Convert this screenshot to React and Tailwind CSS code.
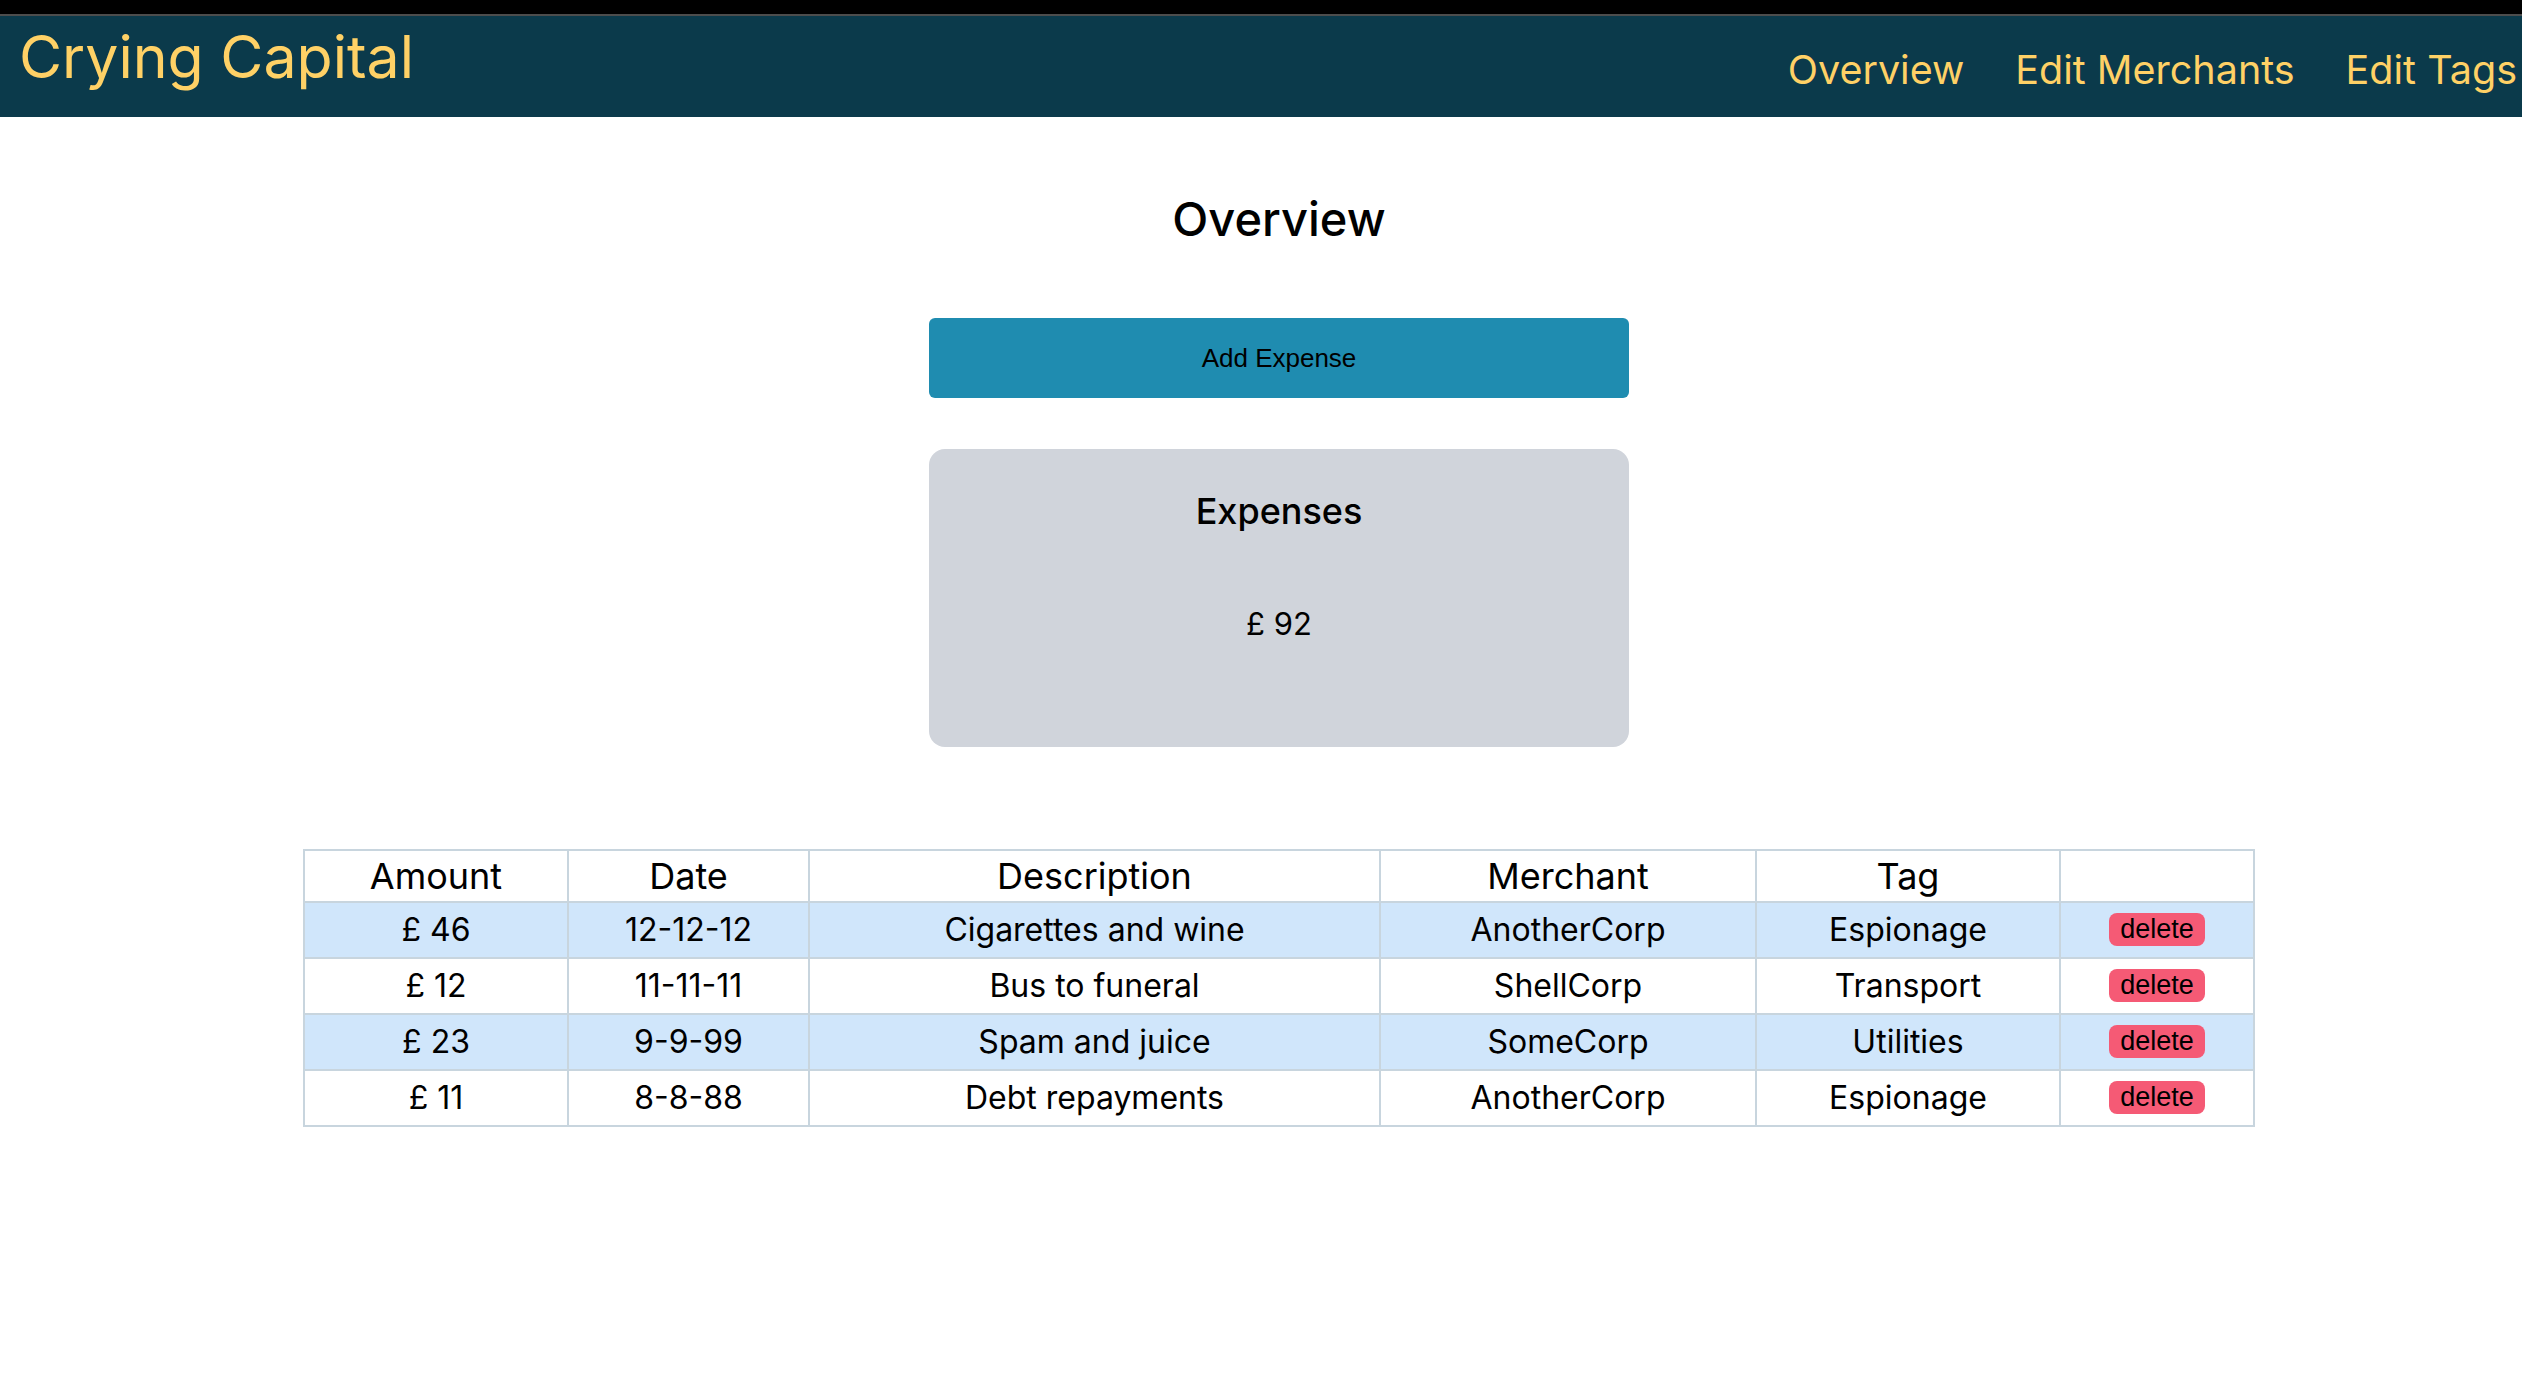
const expenses = [
  { amount: 46, date: '12-12-12', description: 'Cigarettes and wine', merchant: 'AnotherCorp', tag: 'Espionage' },
  { amount: 12, date: '11-11-11', description: 'Bus to funeral', merchant: 'ShellCorp', tag: 'Transport' },
  { amount: 23, date: '9-9-99', description: 'Spam and juice', merchant: 'SomeCorp', tag: 'Utilities' },
  { amount: 11, date: '8-8-88', description: 'Debt repayments', merchant: 'AnotherCorp', tag: 'Espionage' },
]

function NavBar() {
  return (
    <>
      <div className="h-[16px] bg-black border-b-2 border-[#4d4d4d]" />
      <header className="h-[101px] bg-[#0b3a4b] flex justify-between text-[#ffd166] overflow-hidden">
        <h1 className="pl-[19px] pt-[9px] text-[59px] leading-[64px]">Crying Capital</h1>
        <nav className="flex gap-[51px] pt-[29px] pr-[5px] text-[39.5px] leading-[50px]">
          <a>Overview</a>
          <a>Edit Merchants</a>
          <a>Edit Tags</a>
        </nav>
      </header>
    </>
  )
}

function ExpenseRow({ expense, striped }) {
  return (
    <tr className={striped ? 'bg-[#d0e6fb]' : 'bg-white'}>
      <td className="border-2 border-[#c8d5de] h-[56px]">£ {expense.amount}</td>
      <td className="border-2 border-[#c8d5de]">{expense.date}</td>
      <td className="border-2 border-[#c8d5de]">{expense.description}</td>
      <td className="border-2 border-[#c8d5de]">{expense.merchant}</td>
      <td className="border-2 border-[#c8d5de]">{expense.tag}</td>
      <td className="border-2 border-[#c8d5de]">
        <button className="w-[96px] h-[33px] rounded-lg bg-[#f55a75] text-black text-[27px] leading-[33px] font-['Liberation_Sans',Arial,sans-serif] -translate-y-[3px]">
          delete
        </button>
      </td>
    </tr>
  )
}

export default function App() {
  const total = expenses.reduce((sum, e) => sum + e.amount, 0)

  return (
    <div className="min-h-screen bg-white text-black font-['Inter',sans-serif]">
      <NavBar />

      <main className="flex flex-col items-center pl-[36px]">
        <h2 className="mt-[75px] text-[47px] leading-[54px] font-medium">Overview</h2>

        <button className="mt-[72px] w-[700px] h-[80px] rounded-md bg-[#1f8cb0] text-[26px] text-black font-['Liberation_Sans',Arial,sans-serif]">
          Add Expense
        </button>

        {/* Total card */}
        <div className="mt-[51px] w-[700px] h-[298px] rounded-2xl bg-[#d0d4db] flex flex-col items-center">
          <h3 className="mt-[42px] text-[36px] leading-[40px] font-medium">Expenses</h3>
          <p className="mt-[77px] text-[31px] leading-[32px]">£ {total}</p>
        </div>

        <table className="mt-[102px] w-[1950px] border-collapse border-2 border-[#c8d5de] text-center text-[32px] table-fixed">
          <colgroup>
            <col className="w-[264px]" />
            <col className="w-[241px]" />
            <col className="w-[571px]" />
            <col className="w-[376px]" />
            <col className="w-[304px]" />
            <col className="w-[194px]" />
          </colgroup>
          <thead>
            <tr className="bg-white text-[36px] leading-[40px]">
              <th className="border-2 border-[#c8d5de] h-[52px] font-normal">Amount</th>
              <th className="border-2 border-[#c8d5de] font-normal">Date</th>
              <th className="border-2 border-[#c8d5de] font-normal">Description</th>
              <th className="border-2 border-[#c8d5de] font-normal">Merchant</th>
              <th className="border-2 border-[#c8d5de] font-normal">Tag</th>
              <th className="border-2 border-[#c8d5de]" />
            </tr>
          </thead>
          <tbody>
            {expenses.map((e, i) => (
              <ExpenseRow key={i} expense={e} striped={i % 2 === 0} />
            ))}
          </tbody>
        </table>
      </main>
    </div>
  )
}
